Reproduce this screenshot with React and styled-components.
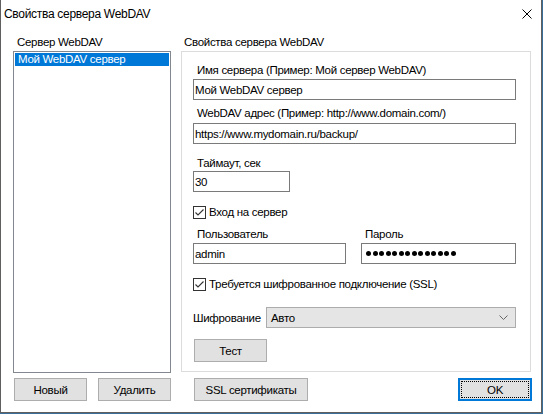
import React from "react";
import styled, { createGlobalStyle } from "styled-components";

const GlobalStyle = createGlobalStyle`
  html, body {
    margin: 0;
    padding: 0;
    background: #3b6f9a;
  }
  body {
    font-family: "Liberation Sans", Arial, sans-serif;
    font-size: 11.5px;
    letter-spacing: -0.3px;
    color: #000;
  }
`;

const Window = styled.div`
  width: 540px;
  height: 412px;
  background: #fff;
  border: 1px solid #5f5f5f;
  border-top: none;
  display: flex;
  flex-direction: column;
`;

const TitleBar = styled.div`
  height: 29px;
  display: flex;
  align-items: center;
  justify-content: space-between;
  padding: 0 9px 1px 3px;
  box-sizing: border-box;
  font-size: 12px;
  line-height: 16px;
`;

const CloseIcon = () => (
  <svg width="10" height="10" viewBox="0 0 10 10">
    <path d="M0.5 0.5 L9.5 9.5 M9.5 0.5 L0.5 9.5" stroke="#000" strokeWidth="1" />
  </svg>
);

const Body = styled.div`
  display: grid;
  grid-template-columns: 158px 350px;
  column-gap: 10px;
  padding: 5px 0 0 12px;
`;

const Column = styled.div`
  display: flex;
  flex-direction: column;
`;

const ColumnTitle = styled.div`
  line-height: 16px;
  padding-left: ${(p) => p.indent}px;
  height: 17px;
`;

const ListBox = styled.div`
  height: 322px;
  border: 1px solid #828790;
  padding: 1px;
  box-sizing: border-box;
`;

const ListItem = styled.div`
  height: 13px;
  line-height: 13px;
  padding-left: 3px;
  background: ${(p) => (p.selected ? "#0078d7" : "transparent")};
  color: ${(p) => (p.selected ? "#fff" : "#000")};
`;

const GroupBox = styled.div`
  height: 321px;
  border: 1px solid #dcdcdc;
  box-sizing: border-box;
  padding: 0 14px 0 11px;
  display: flex;
  flex-direction: column;
`;

const Label = styled.div`
  line-height: 16px;
  height: 16px;
  margin-top: ${(p) => p.top || 0}px;
  padding-left: 4px;
`;

const TextField = styled.input`
  display: block;
  box-sizing: border-box;
  width: ${(p) => p.w || 323}px;
  height: 21px;
  margin: ${(p) => p.top || 0}px 0 0 0;
  border: 1px solid #7a7a7a;
  background: #fff;
  padding: 0 1px;
  font-family: inherit;
  font-size: inherit;
  letter-spacing: inherit;
  color: #000;
  outline: none;
`;

const PasswordField = styled.div`
  box-sizing: border-box;
  width: 155px;
  height: 21px;
  margin-top: 1px;
  border: 1px solid #7a7a7a;
  background: #fff;
  padding: 0 0 0 4px;
  display: flex;
  align-items: center;
  gap: 1.5px;
`;

const Dot = styled.span`
  width: 5px;
  height: 5px;
  border-radius: 50%;
  background: #000;
`;

const CheckRow = styled.label`
  display: flex;
  align-items: center;
  gap: 3px;
  height: 16px;
  margin-top: ${(p) => p.top}px;
`;

const CheckBox = styled.span`
  width: 13px;
  height: 13px;
  box-sizing: border-box;
  border: 1px solid #333;
  background: #fff;
  display: inline-flex;
  align-items: center;
  justify-content: center;
`;

const CheckMark = () => (
  <svg width="11" height="11" viewBox="0 0 11 11">
    <path d="M1.5 5.5 L4 8 L9.5 2.5" fill="none" stroke="#333" strokeWidth="1.1" />
  </svg>
);

const Pair = styled.div`
  display: grid;
  grid-template-columns: 153px 155px;
  column-gap: 15px;
  margin-top: ${(p) => p.top}px;
`;

const ComboRow = styled.div`
  display: flex;
  align-items: center;
  margin-top: ${(p) => p.top}px;
`;

const ComboLabel = styled.div`
  width: 73px;
  line-height: 16px;
`;

const Combo = styled.div`
  width: 250px;
  height: 21px;
  box-sizing: border-box;
  background: #e5e5e5;
  border: 1px solid #acacac;
  display: flex;
  align-items: center;
  justify-content: space-between;
  padding: 0 7px 0 4px;
`;

const Chevron = () => (
  <svg width="9" height="5" viewBox="0 0 9 5">
    <path d="M0.5 0.5 L4.5 4.5 L8.5 0.5" fill="none" stroke="#666" strokeWidth="1" />
  </svg>
);

const Button = styled.button`
  box-sizing: border-box;
  width: ${(p) => p.w}px;
  height: 23px;
  margin-top: ${(p) => p.top || 0}px;
  margin-left: ${(p) => p.left || 0}px;
  background: #e1e1e1;
  border: ${(p) => (p.primary ? "2px solid #0078d7" : "1px solid #adadad")};
  font-family: inherit;
  font-size: inherit;
  letter-spacing: inherit;
  color: #000;
  padding: 0;
  position: relative;
  &::after {
    content: "";
    display: ${(p) => (p.primary ? "block" : "none")};
    position: absolute;
    inset: 1px;
    border: 1px dotted #000;
  }
`;

const Footer = styled.div`
  display: flex;
  align-items: center;
  padding: 5px 9px 0 13px;
`;

const Spacer = styled.div`
  flex: 1;
`;

export default function App() {
  return (
    <>
      <GlobalStyle />
      <Window>
        <TitleBar>
          <span>Свойства сервера WebDAV</span>
          <CloseIcon />
        </TitleBar>
        <Body>
          <Column>
            <ColumnTitle indent={4}>Сервер WebDAV</ColumnTitle>
            <ListBox>
              <ListItem selected>Мой WebDAV сервер</ListItem>
            </ListBox>
          </Column>
          <Column>
            <ColumnTitle indent={3}>Свойства сервера WebDAV</ColumnTitle>
            <GroupBox>
              <Label top={10}>Имя сервера (Пример: Мой сервер WebDAV)</Label>
              <TextField top={1} readOnly defaultValue="Мой WebDAV сервер" />
              <Label top={5}>WebDAV адрес (Пример: http://www.domain.com/)</Label>
              <TextField top={2} readOnly defaultValue="https://www.mydomain.ru/backup/" />
              <Label top={11}>Таймаут, сек</Label>
              <TextField top={0} w={97} readOnly defaultValue="30" />
              <CheckRow top={12}>
                <CheckBox><CheckMark /></CheckBox>
                Вход на сервер
              </CheckRow>
              <Pair top={6}>
                <Column>
                  <Label>Пользователь</Label>
                  <TextField top={1} w={153} readOnly defaultValue="admin" />
                </Column>
                <Column>
                  <Label>Пароль</Label>
                  <PasswordField>
                    {Array.from({ length: 14 }, (_, i) => (
                      <Dot key={i} />
                    ))}
                  </PasswordField>
                </Column>
              </Pair>
              <CheckRow top={12}>
                <CheckBox><CheckMark /></CheckBox>
                Требуется шифрованное подключение (SSL)
              </CheckRow>
              <ComboRow top={15}>
                <ComboLabel>Шифрование</ComboLabel>
                <Combo>
                  <span>Авто</span>
                  <Chevron />
                </Combo>
              </ComboRow>
              <Button w={73} top={11} left={1}>Тест</Button>
            </GroupBox>
          </Column>
        </Body>
        <Footer>
          <Button w={73}>Новый</Button>
          <Button w={73} left={11}>Удалить</Button>
          <Button w={114} left={23}>SSL сертификаты</Button>
          <Spacer />
          <Button w={74} primary>OK</Button>
        </Footer>
      </Window>
    </>
  );
}
